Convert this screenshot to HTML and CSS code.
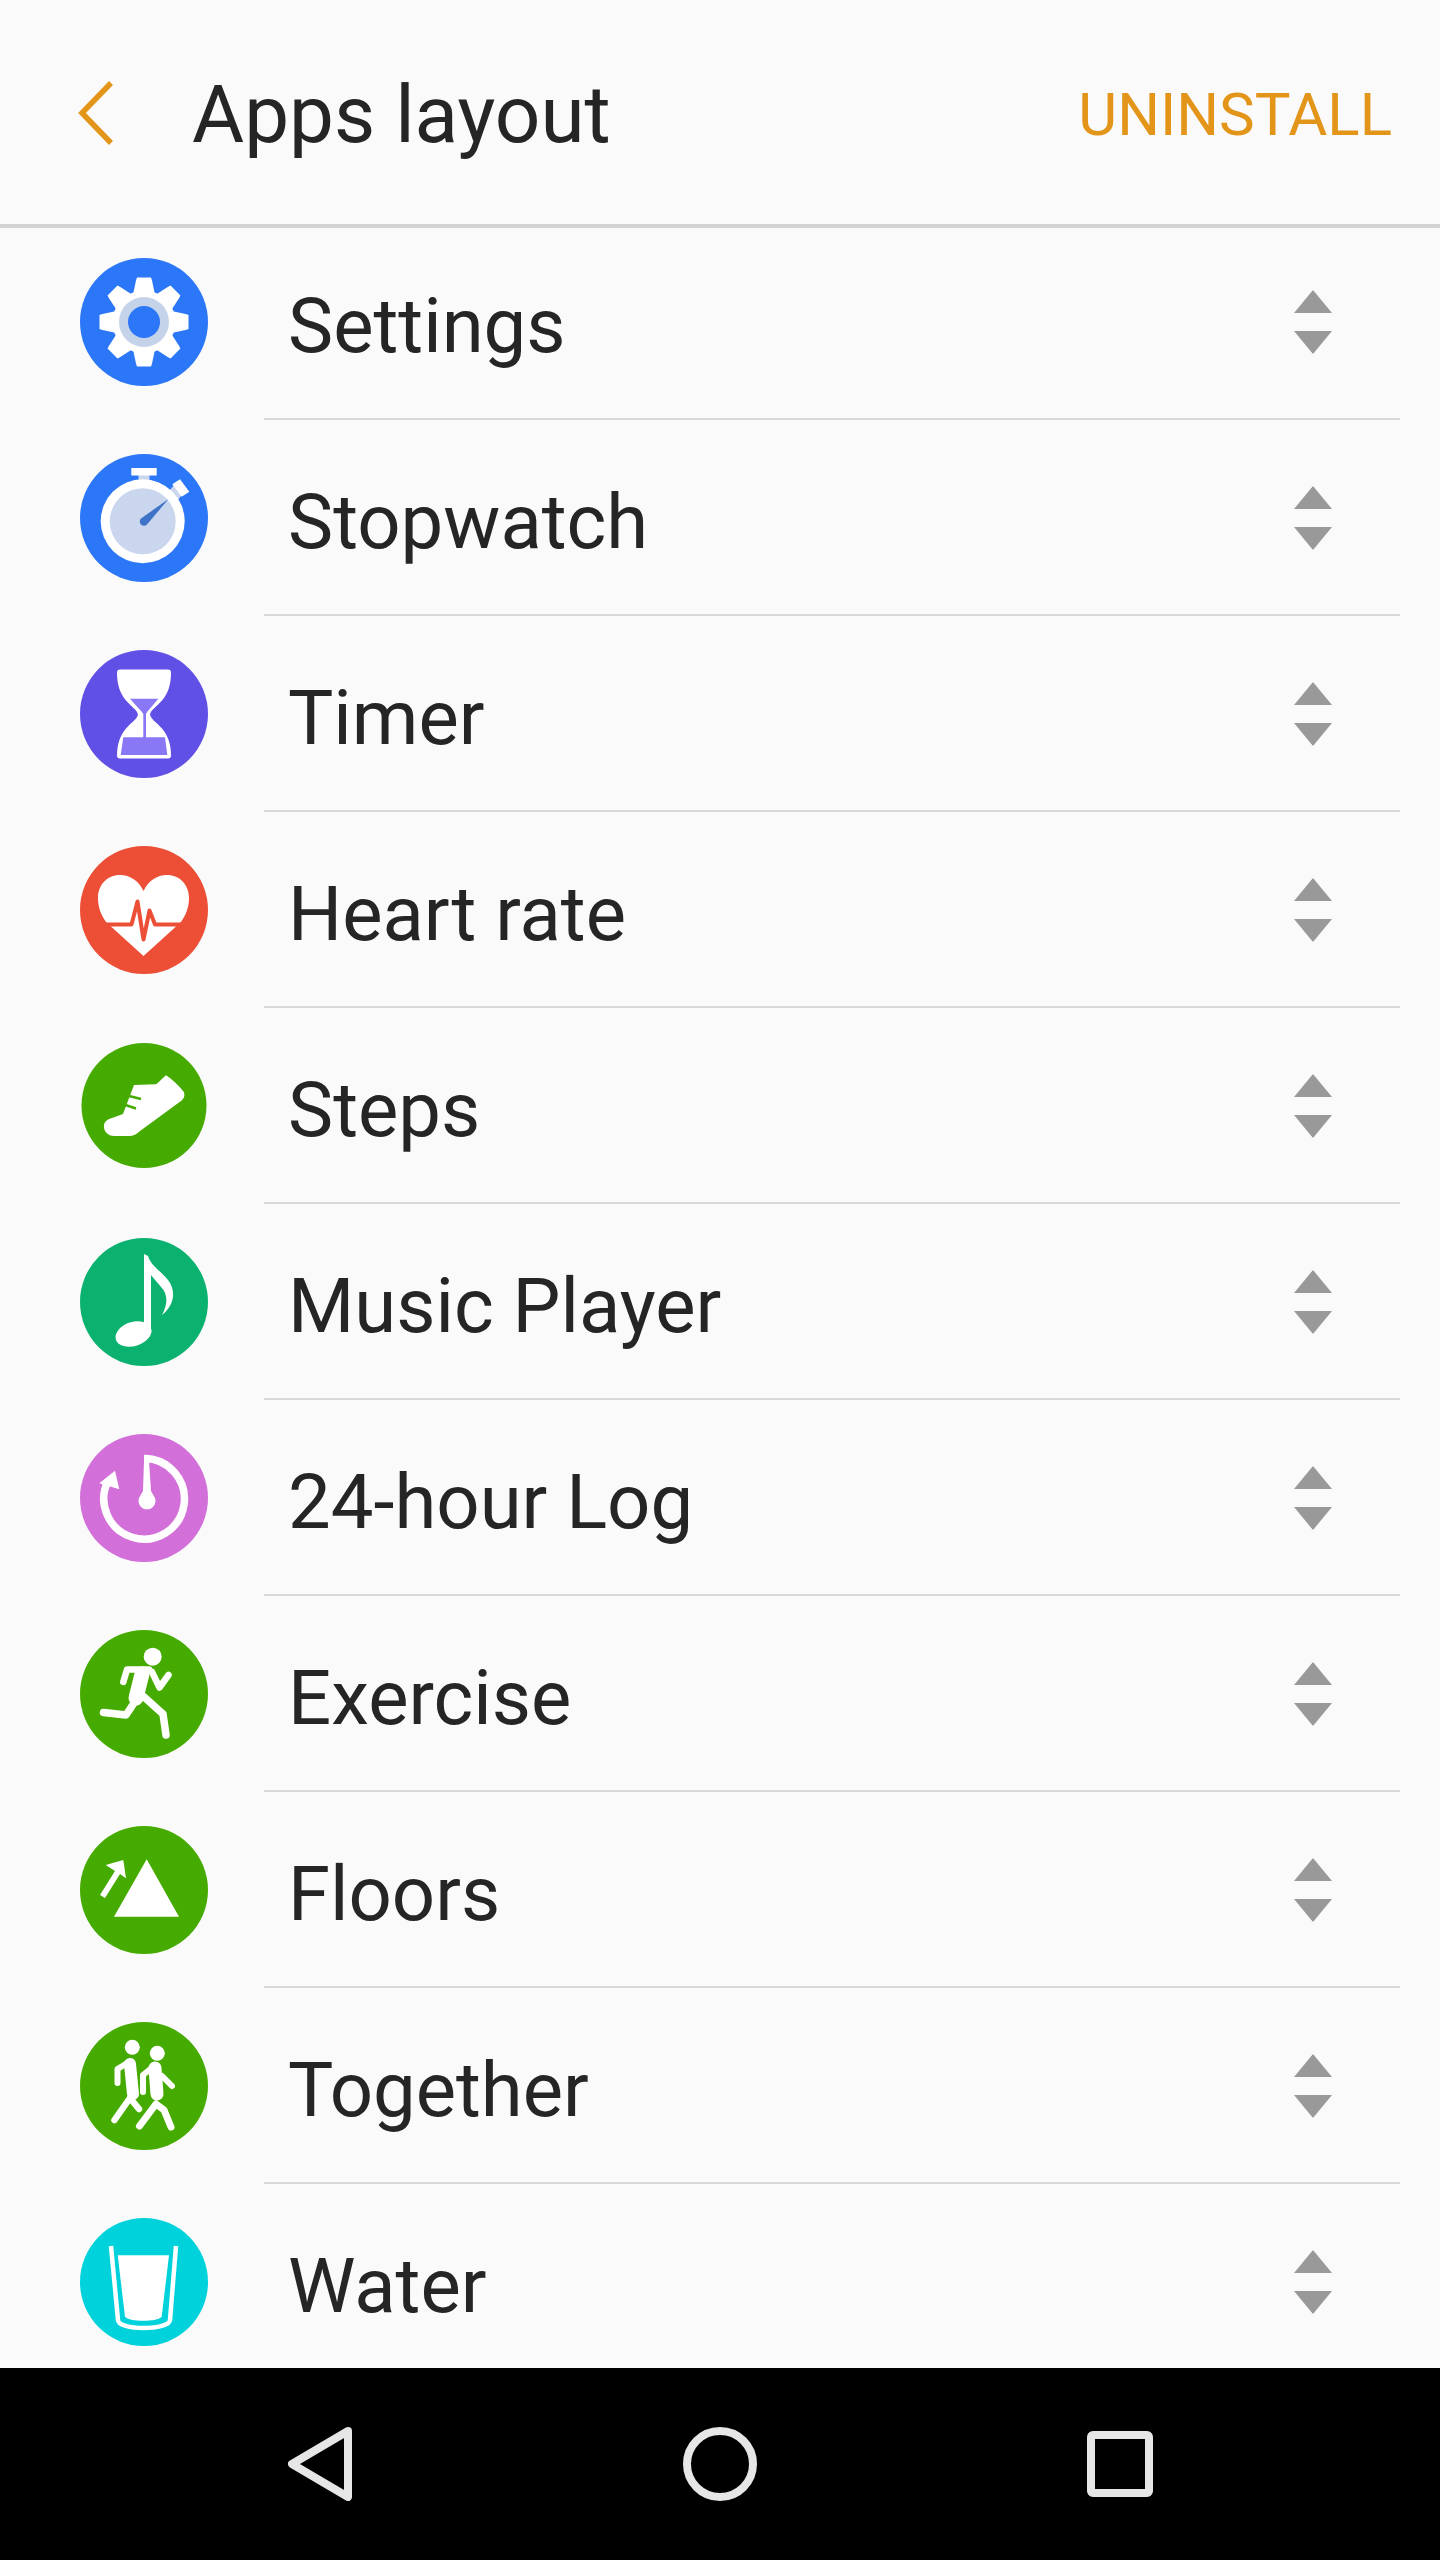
FILE: index.html
```html
<!DOCTYPE html>
<html lang="en">
<head>
    <meta charset="UTF-8">
    <meta name="viewport" content="width=device-width, initial-scale=1.0">
    <title>Apps layout</title>
    <link rel="stylesheet" href="styles.css">
</head>
<body>
    <header class="top-bar">
        <svg class="back-icon" width="36" height="66" viewBox="0 0 36 66">
            <path d="M33 3 4 33l29 30" fill="none" stroke="#e29519" stroke-width="5.5"/>
        </svg>
        <h1 class="title">Apps layout</h1>
        <span class="uninstall">UNINSTALL</span>
    </header>

    <ul class="app-list">
        <li class="app-row">
            <svg class="app-icon" viewBox="0 0 128 128">
                <circle cx="64" cy="64" r="64" fill="#2b77f8"/>
                <g fill="#fff">
                    <circle cx="64" cy="64" r="31.500"/>
                    <path d="M57 19.500h14l1 3 3 14H53l3-14z"/>
                    <path d="M57 19.500h14l1 3 3 14H53l3-14z" transform="rotate(45 64 64)"/>
                    <path d="M57 19.500h14l1 3 3 14H53l3-14z" transform="rotate(90 64 64)"/>
                    <path d="M57 19.500h14l1 3 3 14H53l3-14z" transform="rotate(135 64 64)"/>
                    <path d="M57 19.500h14l1 3 3 14H53l3-14z" transform="rotate(180 64 64)"/>
                    <path d="M57 19.500h14l1 3 3 14H53l3-14z" transform="rotate(225 64 64)"/>
                    <path d="M57 19.500h14l1 3 3 14H53l3-14z" transform="rotate(270 64 64)"/>
                    <path d="M57 19.500h14l1 3 3 14H53l3-14z" transform="rotate(315 64 64)"/>
                </g>
                <circle cx="64" cy="64" r="25" fill="#c5d3ea"/>
                <circle cx="64" cy="64" r="16" fill="#2b77f8"/>
            </svg>
            <span class="app-name">Settings</span>
            <svg class="sort-icon" width="38" height="64" viewBox="0 0 38 64"><path d="M19 0 38 23H0zM0 41h38L19 64z" fill="#999"/></svg>
        </li>
        <li class="app-row">
            <svg class="app-icon" viewBox="0 0 128 128">
                <circle cx="64" cy="64" r="64" fill="#2b77f8"/>
                <rect x="58.500" y="20" width="11" height="9" fill="#c9d6ed"/>
                <path d="m88 38 7-8 9 8-6 8z" fill="#c9d6ed"/>
                <rect x="51.300" y="14" width="25.400" height="7.500" fill="#fff"/>
                <path d="M100 25.300 109.300 37.700 101.700 42.700 92.300 30.300z" fill="#fff"/>
                <circle cx="62.700" cy="67.300" r="42" fill="#fff"/>
                <circle cx="62.700" cy="67.300" r="33" fill="#c9d6ed"/>
                <path d="M88.500 45 67 70.500a4.200 4.200 0 1 1-6-6z" fill="#3f73c7"/>
            </svg>
            <span class="app-name">Stopwatch</span>
            <svg class="sort-icon" width="38" height="64" viewBox="0 0 38 64"><path d="M19 0 38 23H0zM0 41h38L19 64z" fill="#999"/></svg>
        </li>
        <li class="app-row">
            <svg class="app-icon" viewBox="0 0 128 128">
                <circle cx="64" cy="64" r="64" fill="#6050e5"/>
                <path d="M40 19.500h48c2 0 3 1 3 3 0 12-3 21-9 28-5 6-11 9-12 14 1 5 7 8 12 14 6 7 9 16 9 27 0 2-1 3-3 3H40c-2 0-3-1-3-3 0-11 3-20 9-27 5-6 11-9 12-14-1-5-7-8-12-14-6-7-9-16-9-28 0-2 1-3 3-3z" fill="#fff"/>
                <path d="M50 48.700h28.300L67.300 61.700 66 64v24h-2.700V64l-1.600-2.300zM43.300 87.300H85l2.300 17.700H40.700z" fill="#8878f5"/>
            </svg>
            <span class="app-name">Timer</span>
            <svg class="sort-icon" width="38" height="64" viewBox="0 0 38 64"><path d="M19 0 38 23H0zM0 41h38L19 64z" fill="#999"/></svg>
        </li>
        <li class="app-row">
            <svg class="app-icon" viewBox="0 0 128 128">
                <circle cx="64" cy="64" r="64" fill="#ec4e36"/>
                <path d="M63.500 45C59 35 50 29 40 29 27 29 18 39 18 52c0 9 3 17 8 24l37.500 34L101 76c5-7 8-15 8-24 0-13-9-23-22-23-10 0-19 6-23.500 16z" fill="#fff"/>
                <path d="M20 78.500h31.500l6-23 6 38 6-29 5.500 14H106" fill="none" stroke="#ec4e36" stroke-width="4" stroke-linejoin="round"/>
            </svg>
            <span class="app-name">Heart rate</span>
            <svg class="sort-icon" width="38" height="64" viewBox="0 0 38 64"><path d="M19 0 38 23H0zM0 41h38L19 64z" fill="#999"/></svg>
        </li>
        <li class="app-row">
            <svg class="app-icon" viewBox="0 0 128 128">
                <circle cx="64" cy="63.500" r="62.500" fill="#46ab00"/>
                <path d="M24 83c1-4 4-6 8-7l11-4 11-29 22-.7c3-2 6-6 10-9 6 4 13 10 18 17 1 3 0 6-2 8L60 89c-3 3-7 5-11 5H34c-6 0-11-5-10-11z" fill="#fff"/>
                <path d="M47 53.500l14 3.500M44 62.500l12 4" fill="none" stroke="#46ab00" stroke-width="2.500"/>
            </svg>
            <span class="app-name">Steps</span>
            <svg class="sort-icon" width="38" height="64" viewBox="0 0 38 64"><path d="M19 0 38 23H0zM0 41h38L19 64z" fill="#999"/></svg>
        </li>
        <li class="app-row">
            <svg class="app-icon" viewBox="0 0 128 128">
                <circle cx="64" cy="64" r="64" fill="#0bb26f"/>
                <ellipse cx="53.500" cy="96" rx="18.500" ry="12" transform="rotate(-18 53.500 96)" fill="#fff"/>
                <path d="M64 16l4 2c3 10 13 15 20 24 8 10 7 25-6 35 6-11 6-21-1-28-3-4-7-8-10-12v57h-7z" fill="#fff"/>
            </svg>
            <span class="app-name">Music Player</span>
            <svg class="sort-icon" width="38" height="64" viewBox="0 0 38 64"><path d="M19 0 38 23H0zM0 41h38L19 64z" fill="#999"/></svg>
        </li>
        <li class="app-row">
            <svg class="app-icon" viewBox="0 0 128 128">
                <circle cx="64" cy="64" r="64" fill="#d26fd9"/>
                <path d="M64 24.500A40.300 40.300 0 1 1 28 47" fill="none" stroke="#fff" stroke-width="7.500"/>
                <path d="M35 36.700 19.300 49.300l20 6zM64 27h5l2 30 4 7a8.500 8.500 0 1 1-16 0l4-7z" fill="#fff"/>
            </svg>
            <span class="app-name">24-hour Log</span>
            <svg class="sort-icon" width="38" height="64" viewBox="0 0 38 64"><path d="M19 0 38 23H0zM0 41h38L19 64z" fill="#999"/></svg>
        </li>
        <li class="app-row">
            <svg class="app-icon" viewBox="0 0 128 128">
                <circle cx="64" cy="64" r="64" fill="#46ab00"/>
                <circle cx="72.700" cy="26.700" r="9" fill="#fff"/>
                <g fill="none" stroke="#fff" stroke-linecap="round" stroke-linejoin="round">
                    <path d="M43.300 52 47 39.500h22M72 42l7.500 15.500L88.500 45" stroke-width="6.500"/>
                    <path d="M62 44 56 68" stroke-width="15"/>
                    <path d="M23.500 82.500 46 85l10-15M63 66 83 84l3 21" stroke-width="7.500"/>
                </g>
            </svg>
            <span class="app-name">Exercise</span>
            <svg class="sort-icon" width="38" height="64" viewBox="0 0 38 64"><path d="M19 0 38 23H0zM0 41h38L19 64z" fill="#999"/></svg>
        </li>
        <li class="app-row">
            <svg class="app-icon" viewBox="0 0 128 128">
                <circle cx="64" cy="64" r="64" fill="#46ab00"/>
                <path d="M66.700 33.300 99 90.700H34zM25.700 39 43.300 34l2.700 18.300-6-4.300L25 72l-5-3 15-24z" fill="#fff"/>
            </svg>
            <span class="app-name">Floors</span>
            <svg class="sort-icon" width="38" height="64" viewBox="0 0 38 64"><path d="M19 0 38 23H0zM0 41h38L19 64z" fill="#999"/></svg>
        </li>
        <li class="app-row">
            <svg class="app-icon" viewBox="0 0 128 128">
                <circle cx="64" cy="64" r="64" fill="#46ab00"/>
                <circle cx="52.300" cy="25.300" r="7.500" fill="#fff"/>
                <circle cx="77.300" cy="31.300" r="7.500" fill="#fff"/>
                <g fill="none" stroke="#fff" stroke-linecap="round" stroke-linejoin="round">
                    <path d="M37.500 61V47L49 40" stroke-width="6"/>
                    <path d="M50 42 53 72" stroke-width="12"/>
                    <path d="M34.500 98 50 76l9 11" stroke-width="6.500"/>
                    <path d="M63 70V53l10-8M82 54l10 10" stroke-width="6"/>
                    <path d="M75 46 77 72" stroke-width="13"/>
                    <path d="M59.500 104 76 82l8 6 7 17" stroke-width="7"/>
                </g>
            </svg>
            <span class="app-name">Together</span>
            <svg class="sort-icon" width="38" height="64" viewBox="0 0 38 64"><path d="M19 0 38 23H0zM0 41h38L19 64z" fill="#999"/></svg>
        </li>
        <li class="app-row">
            <svg class="app-icon" viewBox="0 0 128 128">
                <circle cx="64" cy="64" r="64" fill="#00d2dc"/>
                <path d="M31 28l7 74c0 5 12 8 25.500 8s26.500-3 26.500-8l6-74" fill="none" stroke="#fff" stroke-width="4.500"/>
                <path d="M37.700 37.300H89l-7.300 61.400c-3 3-10 4-18.400 4s-15.300-1-18.300-4z" fill="#fff"/>
            </svg>
            <span class="app-name">Water</span>
            <svg class="sort-icon" width="38" height="64" viewBox="0 0 38 64"><path d="M19 0 38 23H0zM0 41h38L19 64z" fill="#999"/></svg>
        </li>
    </ul>

    <nav class="nav-bar">
        <svg width="64" height="74" viewBox="0 0 64 74"><path d="M60 4 4 37l56 33z" fill="none" stroke="#e6e6e6" stroke-width="8" stroke-linejoin="round"/></svg>
        <svg width="74" height="74" viewBox="0 0 74 74"><circle cx="37" cy="37" r="33" fill="none" stroke="#e6e6e6" stroke-width="8"/></svg>
        <svg width="66" height="66" viewBox="0 0 66 66"><rect x="4" y="4" width="58" height="58" rx="2" fill="none" stroke="#e6e6e6" stroke-width="8"/></svg>
    </nav>
</body>
</html>
```
FILE: styles.css
```css
* {
    margin: 0;
    padding: 0;
    box-sizing: border-box;
}

body {
    width: 1440px;
    height: 2560px;
    display: flex;
    flex-direction: column;
    overflow: hidden;
    font-family: Roboto, sans-serif;
    background-color: #fafafa;
    color: #252525;
}

.top-bar {
    position: relative;
    z-index: 1;
    flex: none;
    height: 224px;
    display: flex;
    align-items: center;
    padding-top: 2px;
    padding-left: 78px;
    padding-right: 48px;
    background-color: #fafafa;
    box-shadow: 0 4px 0 #d4d4d4;
}

.title {
    margin-left: 78px;
    padding-top: 4px;
    flex: 1;
    font-size: 80px;
    font-weight: 400;
    line-height: 1;
}

.uninstall {
    padding-top: 2px;
    font-size: 60px;
    color: #e29519;
}

.app-list {
    flex: 1;
    list-style: none;
    overflow: hidden;
}

.app-row {
    height: 196px;
    padding-left: 80px;
    padding-right: 108px;
    display: flex;
    align-items: center;
    position: relative;
}

.app-row::after {
    content: "";
    position: absolute;
    left: 264px;
    right: 40px;
    bottom: 0;
    height: 2px;
    background-color: #d8d8d8;
}

.app-icon {
    flex: none;
    width: 128px;
    height: 128px;
}

.app-name {
    flex: 1;
    margin-left: 80px;
    padding-top: 7px;
    font-size: 76px;
}

.nav-bar {
    flex: none;
    height: 192px;
    display: grid;
    grid-template-columns: repeat(3, 400px);
    justify-content: center;
    justify-items: center;
    align-items: center;
    background-color: #000;
}
```
